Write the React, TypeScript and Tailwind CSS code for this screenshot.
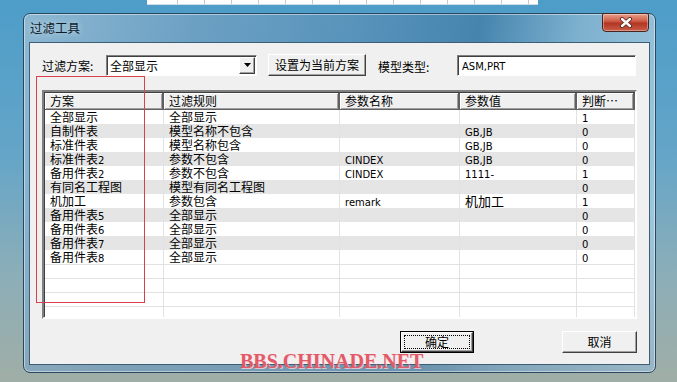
import React from "react"

const rows: string[][] = [
  ["全部显示", "全部显示", "", "", "1"],
  ["自制件表", "模型名称不包含", "", "GB,JB", "0"],
  ["标准件表", "模型名称包含", "", "GB,JB", "0"],
  ["标准件表2", "参数不包含", "CINDEX", "GB,JB", "0"],
  ["备用件表2", "参数不包含", "CINDEX", "1111-", "1"],
  ["有同名工程图", "模型有同名工程图", "", "", "0"],
  ["机加工", "参数包含", "remark", "机加工", "1"],
  ["备用件表5", "全部显示", "", "", "0"],
  ["备用件表6", "全部显示", "", "", "0"],
  ["备用件表7", "全部显示", "", "", "0"],
  ["备用件表8", "全部显示", "", "", "0"],
]

const cols = [
  { name: "方案", w: "w-[119px]" },
  { name: "过滤规则", w: "w-[176px]" },
  { name: "参数名称", w: "w-[120px]" },
  { name: "参数值", w: "w-[117px]" },
  { name: "判断…", w: "w-[58px]" },
]

// ascii runs get the small latin font, the rest stays CJK
function Mixed({ text, big }: { text: string; big?: boolean }) {
  const parts = text.match(/[\x00-\x7f]+|[^\x00-\x7f]+/g) || []
  return (
    <>
      {parts.map((p, i) =>
        /^[\x00-\x7f]+$/.test(p) ? (
          <span key={i} className="font-['DejaVu_Sans',sans-serif] text-[10px] leading-[14px]">{p}</span>
        ) : (
          <span key={i} className={big ? "text-[13px] leading-[14px]" : "leading-[14px]"}>{p}</span>
        )
      )}
    </>
  )
}

function ClassicButton({ label, w, isDefault }: { label: string; w: string; isDefault?: boolean }) {
  return (
    <div className={`${w} h-[22px] ${isDefault ? "border border-black" : ""} bg-[#f0f0f0]`}>
      <div className="w-full h-full border border-t-white border-l-white border-r-[#404040] border-b-[#404040] shadow-[inset_-1px_-1px_0_#a0a0a0] flex items-center justify-center p-[2px]">
        <div className={`w-full h-full flex items-center justify-center ${isDefault ? "border border-dotted border-black" : ""}`}>
          {label}
        </div>
      </div>
    </div>
  )
}

export default function App() {
  return (
    <div className="relative w-[677px] h-[382px] overflow-hidden bg-[linear-gradient(180deg,#4d9dc9_0%,#64a5c8_40%,#8caeb8_72%,#a0aea6_100%)] font-['Noto_Sans_CJK_SC',sans-serif] text-[12px] text-black">
      {/* bottom of the window behind */}
      <div className="ml-[147px] w-[391px] h-[5px] bg-white flex border-b border-[#cfdce6]">
        <div className="w-[31px] h-full border-r border-[#c8c8c8]" />
        {Array.from({ length: 13 }).map((_, i) => (
          <div key={i} className="w-[27px] h-full border-r border-[#c8c8c8] shrink-0" />
        ))}
      </div>

      {/* dialog window */}
      <div className="mt-[8px] ml-[23px] w-[633px] h-[360px] rounded-[7px] border border-[#2a4760] shadow-[inset_0_0_0_1px_rgba(255,255,255,0.45)] bg-[linear-gradient(180deg,rgba(0,0,0,0)_55%,rgba(140,160,172,0.55)_100%),linear-gradient(100deg,#8db8d2_0%,#6ca0c3_25%,#5893bb_48%,#4684ae_66%,#7cb0ce_80%,#a6cde1_100%)] flex flex-col px-[5px] pb-[7px]">
        <div className="h-[28px] flex justify-between items-start">
          <div className="pl-[1px] pt-[6px] leading-[16px] text-[12.5px] text-[#0e1c2a] [text-shadow:0_0_6px_rgba(255,255,255,0.7)]">过滤工具</div>
          <div className="-mt-px mr-px w-[47px] h-[19px] rounded-b-[4px] rounded-t-[2px] border border-[#4a2220] bg-[linear-gradient(180deg,#e6a08c_0%,#d0604a_40%,#b23624_55%,#c85e48_100%)] shadow-[inset_0_0_0_1px_rgba(255,255,255,0.35)] flex items-center justify-center">
            <svg width="14" height="11" viewBox="0 0 14 11">
              <path d="M3 2 L11 9 M11 2 L3 9" stroke="#5a2018" strokeWidth="4" strokeLinecap="round" />
              <path d="M3 2 L11 9 M11 2 L3 9" stroke="#ffffff" strokeWidth="2.4" strokeLinecap="round" />
            </svg>
          </div>
        </div>

        {/* client area */}
        <div className="flex-1 bg-[#f0f0f0] border border-[#3e5e76] flex flex-col">
          <div className="mt-[11px] pl-[12px] flex items-center h-[22px]">
            <div className="w-[64px] pt-[2px]">过滤方案:</div>
            <div className="w-[151px] h-[21px] bg-white border border-t-[#808080] border-l-[#808080] border-r-white border-b-white shadow-[inset_1px_1px_0_#404040] flex items-center">
              <div className="flex-1 pl-[3px] pt-px">全部显示</div>
              <div className="w-[16px] h-[17px] mr-px bg-[#f0f0f0] border border-t-white border-l-white border-r-[#404040] border-b-[#404040] shadow-[inset_-1px_-1px_0_#a0a0a0] flex items-center justify-center">
                <svg width="7" height="4" viewBox="0 0 7 4"><path d="M0 0 H7 L3.5 4 Z" fill="#000" /></svg>
              </div>
            </div>
            <div className="ml-[11px]">
              <ClassicButton label="设置为当前方案" w="w-[98px]" />
            </div>
            <div className="ml-[12px] w-[79px] pt-[4px]">模型类型:</div>
            <div className="w-[179px] h-[21px] bg-white border border-t-[#808080] border-l-[#808080] border-r-white border-b-white shadow-[inset_1px_1px_0_#404040] pl-[4px] pt-[2px] leading-[14px]">
              <span className="font-['DejaVu_Sans',sans-serif] text-[10px]">ASM,PRT</span>
            </div>
          </div>

          {/* list view */}
          <div className="mt-[14px] ml-[12px] w-[595px] h-[229px] bg-white border-2 border-t-[#808080] border-l-[#808080] border-r-white border-b-white shadow-[inset_1px_1px_0_#404040] overflow-hidden">
            <div className="flex h-[17px] mt-px ml-px">
              {cols.map((c) => (
                <div
                  key={c.name}
                  className={`${c.w} shrink-0 h-full bg-[#f0f0f0] border-r-2 border-b border-[#606060] shadow-[inset_1px_1px_0_#fff,inset_-1px_-1px_0_#a0a0a0] pl-[5px] leading-[16px]`}
                >
                  {c.name}
                </div>
              ))}
            </div>
            {rows.map((r, i) => (
              <div key={i} className={`flex h-[14px] ml-px leading-[14px] ${i % 2 ? "bg-[#e5e5e5]" : "bg-white"}`}>
                {r.map((cell, j) => (
                  <div key={j} className={`${cols[j].w} shrink-0 h-full border-r border-[#e2e2e2] pl-[5px] whitespace-nowrap`}>
                    <Mixed text={cell} big={i === 6 && j === 3} />
                  </div>
                ))}
              </div>
            ))}
            {Array.from({ length: 4 }).map((_, i) => (
              <div key={i} className="flex h-[14px] ml-px border-t border-[#e2e2e2]">
                {cols.map((c) => (
                  <div key={c.name} className={`${c.w} shrink-0 h-full border-r border-[#e2e2e2]`} />
                ))}
              </div>
            ))}
          </div>

          <div className="mt-[12px] flex">
            <div className="ml-[370px]">
              <ClassicButton label="确定" w="w-[74px]" isDefault />
            </div>
            <div className="ml-[88px]">
              <ClassicButton label="取消" w="w-[75px]" />
            </div>
          </div>
        </div>
      </div>

      {/* red annotation box */}
      <div className="absolute left-[37px] top-[77px] w-[107px] h-[225px] shadow-[0_0_0_1px_#d8404f]" />

      {/* watermark */}
      <div className="absolute left-[240px] top-[350px] font-['Liberation_Serif',serif] font-bold text-[20px] leading-[22px] text-[#e25a68] [text-shadow:1px_1px_0_rgba(255,210,215,0.8)]">
        BBS.CHINADE.NET
      </div>
    </div>
  )
}
